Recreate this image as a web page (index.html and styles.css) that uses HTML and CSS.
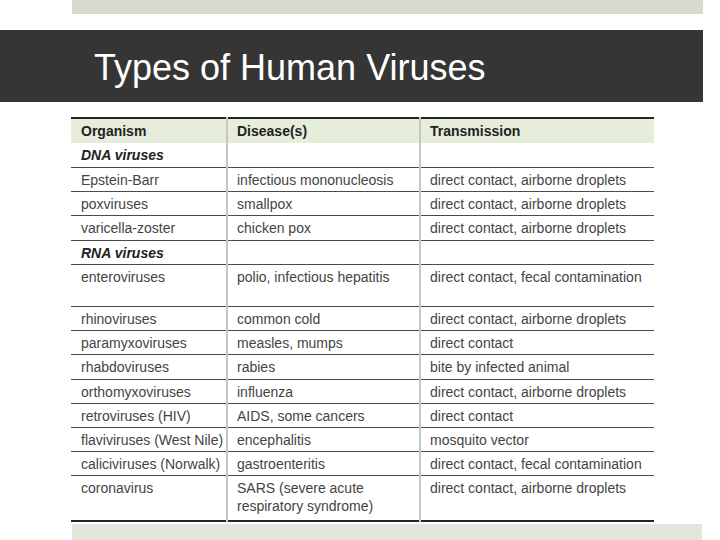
FILE: index.html
```html
<!DOCTYPE html>
<html>
<head>
<meta charset="utf-8">
<link rel="stylesheet" href="styles.css">
</head>
<body>
<div class="slide">
  <div class="top-bar"></div>
  <div class="title-band"><h1 class="title">Types of Human Viruses</h1></div>
  <div class="table-wrap">
    <table class="virus-table">
      <colgroup>
        <col class="col-org">
        <col class="col-dis">
        <col class="col-tra">
      </colgroup>
      <thead>
        <tr class="head"><th>Organism</th><th>Disease(s)</th><th>Transmission</th></tr>
      </thead>
      <tbody>
        <tr class="group first"><td>DNA viruses</td><td></td><td></td></tr>
        <tr><td>Epstein-Barr</td><td>infectious mononucleosis</td><td>direct contact, airborne droplets</td></tr>
        <tr><td>poxviruses</td><td>smallpox</td><td>direct contact, airborne droplets</td></tr>
        <tr class="wide"><td>varicella-zoster</td><td>chicken pox</td><td>direct contact, airborne droplets</td></tr>
        <tr class="group"><td>RNA viruses</td><td></td><td></td></tr>
        <tr class="tall"><td>enteroviruses</td><td>polio, infectious hepatitis</td><td>direct contact, fecal contamination</td></tr>
        <tr><td>rhinoviruses</td><td>common cold</td><td>direct contact, airborne droplets</td></tr>
        <tr><td>paramyxoviruses</td><td>measles, mumps</td><td>direct contact</td></tr>
        <tr class="wide"><td>rhabdoviruses</td><td>rabies</td><td>bite by infected animal</td></tr>
        <tr><td>orthomyxoviruses</td><td>influenza</td><td>direct contact, airborne droplets</td></tr>
        <tr><td>retroviruses (HIV)</td><td>AIDS, some cancers</td><td>direct contact</td></tr>
        <tr><td>flaviviruses (West Nile)</td><td>encephalitis</td><td>mosquito vector</td></tr>
        <tr><td>caliciviruses (Norwalk)</td><td>gastroenteritis</td><td>direct contact, fecal contamination</td></tr>
        <tr class="last"><td>coronavirus</td><td>SARS (severe acute<br>respiratory syndrome)</td><td>direct contact, airborne droplets</td></tr>
      </tbody>
    </table>
  </div>
  <div class="bottom-bar"></div>
</div>
</body>
</html>
```
FILE: styles.css
```css
html, body {
  margin: 0;
  padding: 0;
  background: #ffffff;
}

.slide {
  width: 720px;
  height: 540px;
  overflow: hidden;
  font-family: "Liberation Sans", Arial, sans-serif;
}

.top-bar {
  margin-left: 72px;
  width: 631px;
  height: 14px;
  background: #d7dacf;
}

.title-band {
  margin-top: 16px;
  width: 703px;
  height: 72px;
  background: #353535;
  display: flex;
  align-items: center;
}

.title {
  margin: 0;
  padding: 4px 0 0 94px;
  font-family: "Liberation Sans", Arial, sans-serif;
  font-weight: normal;
  font-size: 36px;
  color: #ffffff;
}

.table-wrap {
  margin-top: 15px;
  margin-left: 71px;
  width: 583px;
}

.virus-table {
  width: 583px;
  border-collapse: collapse;
  table-layout: fixed;
  border-top: 2px solid #262626;
  border-bottom: 2px solid #262626;
  font-size: 14px;
  line-height: 18px;
  color: #444444;
}

.col-org { width: 156px; }
.col-dis { width: 193px; }
.col-tra { width: 234px; }

.virus-table th,
.virus-table td {
  box-sizing: border-box;
  padding: 3px 0 0 9px;
  text-align: left;
  vertical-align: top;
  height: 24px;
  border-top: 1px solid #4a4a4a;
  border-left: 2px solid #c6c6c6;
  white-space: nowrap;
}

.virus-table th:first-child,
.virus-table td:first-child {
  border-left: none;
  padding-left: 10px;
}

.head th {
  background: #e7eddb;
  border-top: none;
  font-weight: bold;
  color: #222222;
  height: 25px;
  padding-top: 3px;
}

.group td:first-child {
  font-weight: bold;
  font-style: italic;
  color: #222222;
}

.group.first td {
  border-top: none;
}

.wide td {
  height: 25px;
}

.tall td {
  height: 42px;
}

.last td {
  height: 46px;
}

.bottom-bar {
  margin-top: 2px;
  margin-left: 72px;
  width: 630px;
  height: 20px;
  background: #e4e4dd;
}
```
